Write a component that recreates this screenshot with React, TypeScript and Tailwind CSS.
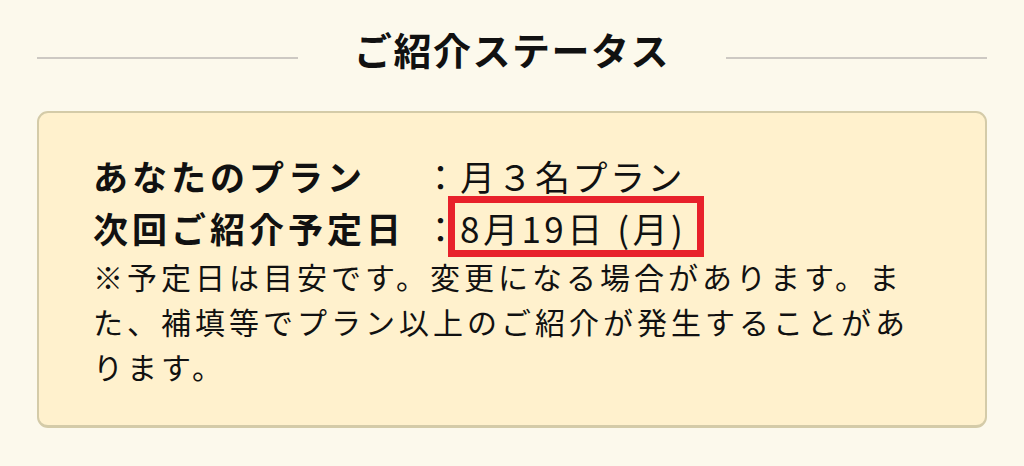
import React from "react";

export default function App() {
  return (
    <div
      className="w-[1024px] h-[466px] bg-[#fcf9ec] px-[37px] pt-[25px] text-[#111111] overflow-hidden"
      style={{ fontFamily: '"Noto Sans CJK JP", "Noto Sans", sans-serif' }}
    >
      <div className="flex items-start">
        <div className="flex-1 h-[2px] mt-[32px] bg-[#cdc9c3]" />
        <h2 className="mx-[56px] text-[38px] leading-[48px] font-bold tracking-[1.5px]">
          ご紹介ステータス
        </h2>
        <div className="flex-1 h-[2px] mt-[32px] bg-[#cdc9c3]" />
      </div>

      <div className="mt-[38px] rounded-[11px] border-2 border-b-[3px] border-[#d4cba8] bg-[#fff1cd] pl-[54px] pr-[54px] pt-[37px] pb-[36px]">
        <div className="flex text-[35px] leading-[52px]">
          <div className="w-[330px] font-bold whitespace-nowrap tracking-[4px]">あなたのプラン</div>
          <div>：</div>
          <div className="whitespace-nowrap tracking-[2.5px] pl-[2px]">月３名プラン</div>
        </div>
        <div className="flex text-[35px] leading-[52px]">
          <div className="w-[330px] font-bold whitespace-nowrap tracking-[4px]">次回ご紹介予定日</div>
          <div>：</div>
          <div className="relative whitespace-nowrap tracking-[3.5px] pl-[2px]">
            8月19日 (月)
            <div className="absolute left-[-10px] top-[-6px] w-[256px] h-[61px] border-[7px] border-[#e8212b]" />
          </div>
        </div>
        <p className="text-[30px] leading-[45px] tracking-[4px]">
          ※予定日は目安です。変更になる場合があります。また、補填等でプラン以上のご紹介が発生することがあります。
        </p>
      </div>
    </div>
  );
}
